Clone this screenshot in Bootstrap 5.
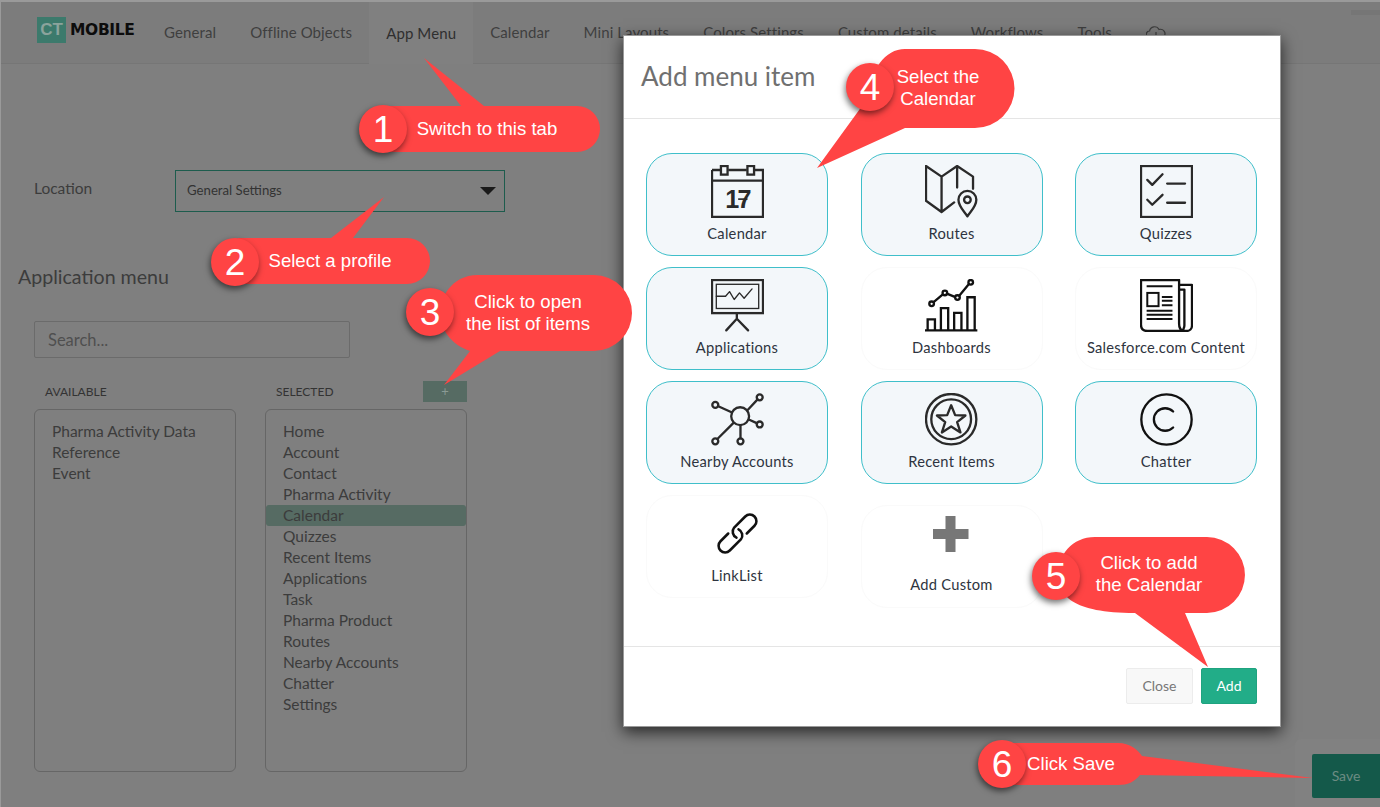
<!DOCTYPE html>
<html lang="en">
  <head>
    <meta charset="UTF-8" />
    <meta name="viewport" content="width=device-width, initial-scale=1.0" />
    <title>CT Mobile - App Menu</title>
    <link href="https://cdn.jsdelivr.net/npm/bootstrap@5.3.0/dist/css/bootstrap.min.css" rel="stylesheet" />
    <style>
      html, body { height: 100%; overflow: hidden; }
      body { font-family: Lato, "Liberation Sans", sans-serif; background: #7f7f7f; color: #3c3c3c; font-size: 15px; }
      .app-shell { position: relative; width: 1380px; height: 807px; overflow: hidden; background: #7f7f7f; border-top: 2px solid #9a9a9a; border-left: 1px solid #9a9a9a; }

      /* top bar */
      .top-bar { height: 62px; padding-left: 36px; background: #7c7c7c; border-bottom: 1px solid #767676; }
      .ct-logo { width: 29px; height: 26px; margin-top: 15px; background: #3c7a6c; color: #8ba39c; font: bold 17px/26px "Liberation Sans", sans-serif; text-align: center; }
      .ct-word { margin: 20px 13px 0 4px; color: #0c0c0c; font: bold 15.500px/17px "DejaVu Sans", sans-serif; letter-spacing: -.35px; width: 64px; }
      .top-bar .nav-link { height: 62px; padding: 21px 17px 0; color: #3f3f3f; font-size: 15px; line-height: 18px; letter-spacing: .1px; }
      .top-bar .nav-link.is-current { background: #808080; padding-top: 22px; color: #2f2f2f; }
      .corner-strip { position: absolute; top: 8px; right: 0; width: 29px; height: 5px; background: #767676; }

      /* form part */
      .location-row { padding: 106px 0 0 33px; }
      .location-label { width: 141px; margin-top: -4px; font-size: 15.500px; }
      .location-select { width: 330px; height: 42px; padding: 0 8px 0 11px; border: 1px solid #1d5c4d; background: #7f7f7f; font-size: 13.200px; color: #333; }
      .select-caret { border-left: 8px solid transparent; border-right: 8px solid transparent; border-top: 8px solid #1a1a1a; }
      .menu-title { margin: 53px 0 0 17px; font-size: 19.600px; line-height: 24px; color: #3c3c3c; font-weight: 400; }
      .search-box { width: 316px; height: 37px; margin: 32px 0 0 33px; padding: 0 13px; background: #7f7f7f; border: 1px solid #6b6b6b; border-radius: 2px; color: #4f4f4f; font-size: 16.500px; line-height: 35px; }
      .search-box::placeholder { color: #4f4f4f; opacity: 1; }
      .columns-row { margin: 23px 0 0 33px; gap: 29px; }
      .list-column { width: 202px; }
      .list-head { height: 28px; padding-left: 11px; font-size: 12px; line-height: 22px; color: #333; }
      .list-add { width: 44px; height: 21px; background: #566b63; color: #8a9a94; font-size: 13px; line-height: 20px; text-align: center; }
      .list-frame { height: 363px; padding-top: 11px; border: 1px solid #666; border-radius: 6px; }
      .list-entry { height: 21px; padding-left: 17px; line-height: 21px; font-size: 15.500px; color: #3c3c3c; }
      .list-entry.is-picked { background: #566b63; border-radius: 3px; }

      /* save area */
      .save-area { position: absolute; right: 0; bottom: 0; width: 85px; height: 68px; background: #818181; border-top-left-radius: 6px; }
      .save-btn { position: absolute; right: 0; bottom: 9px; width: 68px; height: 44px; background: #14594a; border-radius: 2px 0 0 2px; color: #6c8c83; font-size: 14px; line-height: 44px; text-align: center; }

      /* dialog */
      .add-dialog { position: absolute; left: 622px; top: 33px; width: 658px; height: 692px; background: #fff; border: 1px solid #9a9a9a; border-radius: 0; box-shadow: 0 5px 15px rgba(0, 0, 0, .7); }
      .add-dialog .modal-header { height: 83px; padding: 0 17px; border-bottom: 1px solid #e5e5e5; }
      .add-dialog .modal-title { font-size: 26px; line-height: 30px; color: #707070; margin-top: -3px; font-weight: 400; }
      .tile-grid { display: grid; grid-template-columns: repeat(3, 182px); column-gap: 32.5px; row-gap: 11px; align-items: start; align-content: start; padding: 34px 0 0 22px; flex: 1 1 auto; }
      .menu-tile { height: 103px; padding-top: 11px; border: 1px solid #fafafa; border-radius: 26px; text-align: center; color: #2e3440; font-size: 14.700px; line-height: 18px; letter-spacing: .25px; }
      .menu-tile.is-on { background: #f3f7fa; border-color: #3fbfca; }
      .menu-tile.is-lower { margin-top: 10px; }
      .menu-tile svg { display: block; width: 53px; height: 53px; margin: 0 auto 6px; }
      .plus-mark { padding-top: 9px; }
      .plus-mark svg { width: 38px; height: 38px; margin-bottom: 22px; }
      .add-dialog .modal-footer { height: 80px; padding: 0 23px 2px 0; border-top: 1px solid #e5e5e5; gap: 8px; align-items: center; }
      .add-dialog .modal-footer .btn { margin: 0; height: 36px; font-size: 14px; line-height: 22px; border-radius: 2px; }
      .btn-dim { width: 67px; background: #f8f8f8; border: 1px solid #ececec; color: #777; }
      .btn-add { width: 56px; background: #22ad88; border: 1px solid #1fa37f; color: #fff; }

      /* callouts */
      .callouts { position: absolute; left: -1px; top: -2px; width: 1380px; height: 807px; pointer-events: none; }
      .callouts .bubble { fill: #ff4444; }
      .callouts .dot { fill: #ff4444; filter: drop-shadow(-1px 3px 3px rgba(0, 0, 0, .55)); }
      .callouts text { fill: #fff; font-family: "Liberation Sans", Arial, sans-serif; font-size: 18.600px; text-anchor: middle; }
      .callouts text.num { font-size: 37px; }
      .ic { fill: none; stroke: #2a2a2a; stroke-width: 7; stroke-linecap: round; stroke-linejoin: round; }
      .ic-sq { stroke-linecap: butt; stroke-linejoin: miter; }
      .ic-black { stroke: #111; }
    </style>
  </head>
  <body>
    <div class="app-shell">
      <!-- top menu -->
      <div class="top-bar d-flex">
        <div class="ct-logo">CT</div>
        <div class="ct-word">MOBILE</div>
        <ul class="nav flex-nowrap">
          <li class="nav-item"><a class="nav-link" href="#">General</a></li>
          <li class="nav-item"><a class="nav-link" href="#">Offline Objects</a></li>
          <li class="nav-item"><a class="nav-link is-current" href="#">App Menu</a></li>
          <li class="nav-item"><a class="nav-link" href="#">Calendar</a></li>
          <li class="nav-item"><a class="nav-link" href="#">Mini Layouts</a></li>
          <li class="nav-item"><a class="nav-link" href="#">Colors Settings</a></li>
          <li class="nav-item"><a class="nav-link" href="#">Custom details</a></li>
          <li class="nav-item"><a class="nav-link" href="#">Workflows</a></li>
          <li class="nav-item"><a class="nav-link" href="#">Tools</a></li>
          <li class="nav-item">
            <a class="nav-link" href="#">
              <svg width="20" height="18" viewBox="0 0 20 18"><path d="M5 13H4a3.5 3.5 0 0 1-.4-7A5 5 0 0 1 13 4.500a4 4 0 0 1 3 8.500h-1M10 7v9m-3-3 3 3 3-3" fill="none" stroke="#3f3f3f" stroke-width="1.200"/></svg>
            </a>
          </li>
        </ul>
      </div>
      <div class="corner-strip"></div>

      <!-- location -->
      <div class="location-row d-flex align-items-center">
        <div class="location-label">Location</div>
        <div class="location-select d-flex align-items-center justify-content-between">
          <span>General Settings</span>
          <span class="select-caret"></span>
        </div>
      </div>

      <h5 class="menu-title">Application menu</h5>
      <input class="search-box d-block" type="text" placeholder="Search..." />

      <div class="columns-row d-flex">
        <div class="list-column">
          <div class="list-head">AVAILABLE</div>
          <div class="list-frame">
            <div class="list-entry">Pharma Activity Data</div>
            <div class="list-entry">Reference</div>
            <div class="list-entry">Event</div>
          </div>
        </div>
        <div class="list-column">
          <div class="list-head d-flex justify-content-between">
            <span>SELECTED</span>
            <span class="list-add">+</span>
          </div>
          <div class="list-frame">
            <div class="list-entry">Home</div>
            <div class="list-entry">Account</div>
            <div class="list-entry">Contact</div>
            <div class="list-entry">Pharma Activity</div>
            <div class="list-entry is-picked">Calendar</div>
            <div class="list-entry">Quizzes</div>
            <div class="list-entry">Recent Items</div>
            <div class="list-entry">Applications</div>
            <div class="list-entry">Task</div>
            <div class="list-entry">Pharma Product</div>
            <div class="list-entry">Routes</div>
            <div class="list-entry">Nearby Accounts</div>
            <div class="list-entry">Chatter</div>
            <div class="list-entry">Settings</div>
          </div>
        </div>
      </div>

      <div class="save-area"><div class="save-btn">Save</div></div>

      <!-- dialog -->
      <div class="modal-content add-dialog d-flex flex-column">
        <div class="modal-header">
          <h4 class="modal-title">Add menu item</h4>
        </div>
        <div class="tile-grid">
          <div class="menu-tile is-on">
            <svg viewBox="0 0 160 160"><path class="ic ic-sq" d="M3 15H28M52 15H108M132 15H157V157H3V15M3 47H157"/><rect class="ic ic-sq" x="30" y="3" width="20" height="26"/><rect class="ic ic-sq" x="110" y="3" width="20" height="26"/><text x="80" y="130" text-anchor="middle" font-family="'Liberation Sans', sans-serif" font-weight="700" font-size="76" letter-spacing="-5" fill="#2a2a2a">17</text><path class="ic ic-sq" style="stroke-width:5" d="M82 103H110"/></svg>
            Calendar
          </div>
          <div class="menu-tile is-on">
            <svg viewBox="0 0 160 160"><path class="ic" d="M3 3 50 35 97 3 145 35V72M3 3V108L50 142 88 113M50 35V142M97 3V68"/><path class="ic" d="M128 155C118 140 101 125 101 105A27 27 0 0 1 155 105C155 125 138 140 128 155Z"/><circle class="ic" cx="128" cy="105" r="10"/></svg>
            Routes
          </div>
          <div class="menu-tile is-on">
            <svg viewBox="0 0 160 160"><rect class="ic ic-sq" x="3" y="3" width="154" height="154"/><path class="ic" d="M22 45 37 60 68 28M82 56H136M22 105 37 120 68 90M82 114H136"/></svg>
            Quizzes
          </div>
          <div class="menu-tile is-on">
            <svg viewBox="0 0 160 160"><rect class="ic ic-sq" x="3" y="3" width="154" height="100"/><rect class="ic ic-sq" x="16" y="16" width="128" height="73" style="stroke-width:4"/><path class="ic" style="stroke-width:4" d="M16 52H44L56 38 70 62 86 42 100 58 124 30"/><path class="ic" d="M78 103V120M78 120 46 155M78 120 112 155"/></svg>
            Applications
          </div>
          <div class="menu-tile">
            <svg viewBox="0 0 160 160"><path class="ic ic-sq ic-black" d="M0 155H158"/><path class="ic ic-sq ic-black" d="M8 155V122H30V155M48 155V88H70V155M88 155V102H110V155M128 155V55H150V155"/><path class="ic ic-black" d="M26 70 52 48M66 44 90 54M104 50 132 16"/><circle class="ic ic-black" cx="20" cy="75" r="7"/><circle class="ic ic-black" cx="60" cy="42" r="7"/><circle class="ic ic-black" cx="98" cy="56" r="7"/><circle class="ic ic-black" cx="138" cy="10" r="7"/></svg>
            Dashboards
          </div>
          <div class="menu-tile">
            <svg viewBox="0 0 160 160"><path class="ic ic-black" d="M3 3H118V135C118 148 124 157 135 157H22C10 157 3 150 3 138ZM118 18H157V140C157 150 150 157 140 157H135C125 157 134 150 134 140V32H118"/><path class="ic ic-sq ic-black" style="stroke-width:6" d="M20 22H98M66 54H98M66 66H98M66 79H98M20 96H98M20 108H98M20 121H98"/><rect class="ic ic-sq ic-black" style="stroke-width:6" x="22" y="42" width="34" height="40"/></svg>
            Salesforce.com Content
          </div>
          <div class="menu-tile is-on">
            <svg viewBox="0 0 160 160"><circle class="ic" cx="88" cy="70" r="27"/><circle class="ic" cx="13" cy="36" r="9"/><circle class="ic" cx="147" cy="13" r="9"/><circle class="ic" cx="147" cy="95" r="9"/><circle class="ic" cx="13" cy="146" r="9"/><circle class="ic" cx="89" cy="146" r="9"/><path class="ic" d="M22 40 62 58M110 52 140 20M114 80 138 91M68 90 20 138M89 97V137"/></svg>
            Nearby Accounts
          </div>
          <div class="menu-tile is-on">
            <svg viewBox="0 0 160 160"><circle class="ic" cx="79" cy="79" r="76"/><circle class="ic" cx="79" cy="79" r="60"/><path class="ic" d="M79 37 91 67 122 68 97 88 107 119 79 101 51 119 61 88 36 68 67 67Z"/></svg>
            Recent Items
          </div>
          <div class="menu-tile is-on">
            <svg viewBox="0 0 160 160"><circle class="ic ic-black" cx="80" cy="80" r="76"/><path class="ic ic-black" d="M100 56A34 34 0 1 0 100 104"/></svg>
            Chatter
          </div>
          <div class="menu-tile">
            <svg viewBox="0 0 160 160"><g transform="translate(80 80) rotate(-45) scale(1.100)"><path class="ic ic-black" d="M18 18H48A18 18 0 0 0 48 -18H5A18 18 0 0 0 -10 6"/></g><g transform="translate(80 80) rotate(135) scale(1.100)"><path class="ic ic-black" d="M18 18H48A18 18 0 0 0 48 -18H5A18 18 0 0 0 -10 6"/></g></svg>
            LinkList
          </div>
          <div class="menu-tile is-lower plus-mark">
            <svg viewBox="0 0 38 38"><path fill="#777" d="M12.500 1H22.500V14H35.500V24H22.500V37H12.500V24H-.5V14H12.500Z"/></svg>
            Add Custom
          </div>
        </div>
        <div class="modal-footer">
          <button class="btn btn-dim p-0" type="button">Close</button>
          <button class="btn btn-add p-0" type="button">Add</button>
        </div>
      </div>

      <!-- numbered callouts drawn over the page -->
      <svg class="callouts" viewBox="0 0 1380 807">
        <path class="bubble" d="M424 58 484 106H577A23 23 0 0 1 577 152H385V106H461Z"/>
        <circle class="dot" cx="383" cy="129" r="24"/>
        <text class="num" x="383" y="142">1</text>
        <text x="487" y="135">Switch to this tab</text>

        <path class="bubble" d="M384 197 353 238H407A23 23 0 0 1 407 284H238V238H331Z"/>
        <circle class="dot" cx="235" cy="262" r="24"/>
        <text class="num" x="235" y="275">2</text>
        <text x="330" y="267">Select a profile</text>

        <path class="bubble" d="M444 385 500 351H594A38 38 0 0 0 594 275H478C450 275 440 300 440 312 440 330 452 345 470 351Z"/>
        <circle class="dot" cx="430" cy="312" r="24"/>
        <text class="num" x="430" y="325">3</text>
        <text x="528" y="308">Click to open</text>
        <text x="528" y="330">the list of items</text>

        <path class="bubble" d="M817 168 905 128H975A38 38 0 0 0 975 49H905C885 49 870 70 870 95Z"/>
        <circle class="dot" cx="870" cy="87" r="24"/>
        <text class="num" x="870" y="100">4</text>
        <text x="938" y="83">Select the</text>
        <text x="938" y="105">Calendar</text>

        <path class="bubble" d="M1208 667 1185 613H1207A38 38 0 0 0 1207 537H1095C1072 537 1058 555 1058 575 1058 595 1072 613 1135 613Z"/>
        <circle class="dot" cx="1056" cy="576" r="24"/>
        <text class="num" x="1056" y="589">5</text>
        <text x="1149" y="569">Click to add</text>
        <text x="1149" y="591">the Calendar</text>

        <path class="bubble" d="M1313 778 1140 775C1134 782 1128 785 1118 785H1002V743H1118C1130 743 1138 750 1142 756Z"/>
        <circle class="dot" cx="1002" cy="764" r="24"/>
        <text class="num" x="1002" y="777">6</text>
        <text x="1071" y="770">Click Save</text>
      </svg>
    </div>
    <script src="https://cdn.jsdelivr.net/npm/bootstrap@5.3.0/dist/js/bootstrap.bundle.min.js"></script>
  </body>
</html>
